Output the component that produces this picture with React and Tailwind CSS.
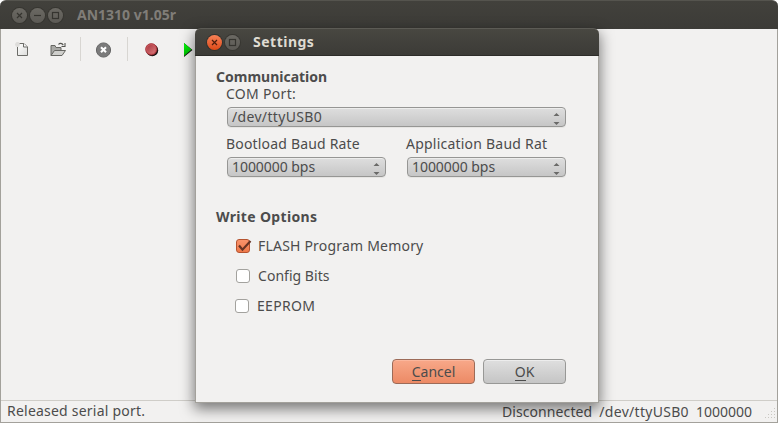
import React from "react";

function TitleButton({ kind, active }) {
  return (
    <span
      className={
        "flex h-[15px] w-[15px] shrink-0 items-center justify-center rounded-full " +
        (active
          ? "bg-linear-to-b from-[#f78155] to-[#dc4813] shadow-[0_0_0_1px_#33322e]"
          : "bg-linear-to-b from-[#6b6963] to-[#5c5a55] shadow-[0_0_0_1px_#373631]")
      }
    >
      <svg width="15" height="15" viewBox="0 0 15 15" fill="none" stroke={active ? "#4d1d0c" : "#35342f"} strokeWidth="1.2">
        {kind === "close" && <path d="M5 5l5 5M10 5l-5 5" />}
        {kind === "min" && <path d="M4 7.5h7" />}
        {kind === "max" && <rect x="4.5" y="4.5" width="6" height="6" />}
      </svg>
    </span>
  );
}

function Toolbar() {
  return (
    <div className="flex h-10 items-center pl-[13px]">
      <svg className="mt-px shrink-0" width="16" height="16" viewBox="0 0 16 16">
        <defs>
          <linearGradient id="paper" x2="1" y2="1">
            <stop stopColor="#fff" />
            <stop offset="1" stopColor="#dcdcda" />
          </linearGradient>
        </defs>
        <path d="M3.5 1.500h6.500l3.500 3.500v8.500h-10z" fill="url(#paper)" stroke="#6c6c68" />
        <path d="M9.500 1.500v3.500h4" fill="#f7f7f6" stroke="#6c6c68" />
        <path d="M1 2.500h5M3.500 0v5M1.800.800l3.400 3.400M5.200.800L1.800 4.200" stroke="#dedddb" strokeWidth="1.600" />
      </svg>
      <svg className="ml-5 mt-px shrink-0" width="16" height="16" viewBox="0 0 16 16">
        <path d="M1 13.500v-10h4l1 2h5v3" fill="#a9a9a6" stroke="#666662" />
        <path d="M1 13.500l3.500-5h11l-3.500 5z" fill="#cfcfcc" stroke="#666662" />
        <path d="M8.500 2.500c1-1.600 3.500-1.600 4.800.6M15 1v3.500h-3.500" fill="none" stroke="#555550" strokeWidth="1.100" />
      </svg>
      <span className="ml-[14px] h-6 w-px bg-[#d8d6d2]" />
      <svg className="ml-[15px] mt-px shrink-0" width="16" height="16" viewBox="0 0 16 16">
        <circle cx="7.500" cy="8" r="7.100" fill="#7b7b7b" stroke="#666" />
        <path d="M5 5.200l5 5M10 5.200l-5 5" stroke="#fff" strokeWidth="2.100" />
      </svg>
      <span className="ml-[15px] h-6 w-px bg-[#d8d6d2]" />
      <svg className="ml-4 mt-px shrink-0" width="16" height="16" viewBox="0 0 16 16">
        <defs>
          <linearGradient id="record" x2="1" y2="1">
            <stop stopColor="#a93840" />
            <stop offset="1" stopColor="#dc7a7c" />
          </linearGradient>
        </defs>
        <circle cx="8.200" cy="8.200" r="6" fill="#111" />
        <circle cx="7.300" cy="7.300" r="5.700" fill="#c9575c" stroke="#a02c34" strokeWidth=".8" />
        <circle cx="7.300" cy="7.300" r="4.200" fill="url(#record)" />
      </svg>
      <svg className="ml-[23px] mt-px shrink-0" width="12" height="16" viewBox="0 0 12 16">
        <defs>
          <linearGradient id="play" x2="0" y2="1">
            <stop stopColor="#00ff08" />
            <stop offset="1" stopColor="#00b800" />
          </linearGradient>
        </defs>
        <path d="M1 1l8.500 7L1 15z" fill="#111" />
        <path d="M1 1l7.500 6.500L1 14z" fill="url(#play)" />
      </svg>
    </div>
  );
}

function Select({ label, tracking }) {
  return (
    <div className="ml-px mt-1 flex h-5 items-center justify-between rounded-[4px] border border-[#969694] bg-linear-to-b from-[#dedede] to-[#c6c6c6] px-[5px] pl-1 shadow-[inset_0_1px_0_#ededec,0_1px_0_#e6e5e3]">
      <span className={"whitespace-pre pb-[2px] " + tracking}>{label}</span>
      <svg className="mt-[4px]" width="7" height="12" viewBox="0 0 7 12" fill="#6a6a68">
        <path d="M.5 3L3.500 0l3 3zM.5 9h6l-3 3z" />
      </svg>
    </div>
  );
}

function Check({ label, checked, tracking, className = "" }) {
  return (
    <div className={"flex h-[30px] items-center " + className}>
      <span
        className={
          "mt-[2px] h-[14px] w-[14px] shrink-0 rounded-[3px] border " +
          (checked ? "border-[#b5532f] bg-linear-to-b from-[#f9936b] to-[#ee7849]" : "border-[#a3a29e] bg-white")
        }
      >
        {checked && (
          <svg className="overflow-visible" width="14" height="12" viewBox="0 0 14 12">
            <path d="M2 5.500l3.500 4.200L13.500 1" fill="none" stroke="#663324" strokeWidth="2.200" />
          </svg>
        )}
      </span>
      <span className={"ml-2 whitespace-pre " + tracking}>{label}</span>
    </div>
  );
}

function Button({ mnemonic, rest, primary }) {
  return (
    <button
      className={
        "flex h-[25px] w-[83px] items-center justify-center rounded-[4px] border " +
        (primary
          ? "border-[#9c6b58] bg-linear-to-b from-[#f8a889] to-[#ec8a65] shadow-[inset_0_1px_0_#fbb79d]"
          : "border-[#989896] bg-linear-to-b from-[#dfdfdf] to-[#c5c5c5] shadow-[inset_0_1px_0_#ededed]")
      }
    >
      <span className="border-b border-[#4c4c4c] leading-[17px]">{mnemonic}</span>
      <span className="leading-[18px]">{rest}</span>
    </button>
  );
}

function SettingsDialog() {
  return (
    <div className="absolute left-[195px] top-[28px] flex h-[375px] w-[404px] flex-col rounded-t-[6px] shadow-[0_5px_14px_1px_rgba(0,0,0,0.5)]">
      <div className="flex h-7 shrink-0 items-center rounded-t-[6px] border-t border-b border-t-[#5c5b55] border-b-[#2d2c29] bg-linear-to-b from-[#484741] to-[#3c3b37] pl-3">
        <TitleButton kind="close" active />
        <span className="w-[3px]" />
        <TitleButton kind="max" />
        <span className="ml-[13px] pb-[2px] text-[14px] font-bold tracking-[0.5px] text-[#dfdbd2]">Settings</span>
      </div>
      <div className="flex flex-1 flex-col border-x border-b border-[#a3a19b] bg-[#f2f1f0] pl-5 pr-8 pt-3">
        <div className="h-[17px] text-[14px] font-bold leading-[17px]">Communication</div>
        <div className="pl-[10px]">
          <div className="h-[18px] leading-[17px] tracking-[0.3px]">COM Port:</div>
          <Select label="/dev/ttyUSB0" tracking="tracking-[0.33px]" />
          <div className="mt-[7px] flex gap-5">
            <div className="w-[160px]">
              <div className="h-[19px] whitespace-nowrap leading-[19px] tracking-[0.18px]">Bootload Baud Rate</div>
              <Select label="1000000 bps" tracking="tracking-[-0.05px]" />
            </div>
            <div className="w-[160px]">
              <div className="h-[19px] whitespace-nowrap leading-[19px] tracking-[0.22px]">Application Baud Rat</div>
              <Select label="1000000 bps" tracking="tracking-[-0.05px]" />
            </div>
          </div>
        </div>
        <div className="mt-[31px] h-[18px] text-[14px] font-bold leading-[18px] tracking-[0.33px]">Write Options</div>
        <div className="mt-[4px]">
          <Check label="FLASH Program Memory" checked tracking="tracking-[0.2px]" className="pl-5" />
          <Check label="Config Bits" tracking="tracking-[0.03px]" className="pl-5" />
          <Check label="EEPROM" tracking="tracking-[0.3px]" className="pl-[19px]" />
        </div>
        <div className="mt-[39px] flex justify-end gap-2">
          <Button mnemonic="C" rest="ancel" primary />
          <Button mnemonic="O" rest="K" />
        </div>
      </div>
    </div>
  );
}

export default function App() {
  return (
    <div className="relative flex h-[423px] w-[778px] flex-col overflow-hidden bg-white font-['Noto_Sans',sans-serif] text-[14px] text-[#4c4c4c]">
      <div className="flex h-[29px] shrink-0 items-center rounded-t-[6px] border-t border-[#55544e] bg-linear-to-b from-[#42413c] to-[#3c3b37] pl-3">
        <div className="flex gap-[3px]">
          <TitleButton kind="close" />
          <TitleButton kind="min" />
          <TitleButton kind="max" />
        </div>
        <span className="ml-[14px] pb-[2px] font-bold text-[#807d78]">AN1310 v1.05r</span>
      </div>
      <div className="flex flex-1 flex-col border-x border-b border-[#a3a19b] bg-[#f2f1f0]">
        <Toolbar />
        <div className="flex-1" />
        <div className="flex h-[22px] items-center border-t border-[#cfcdc8] pl-[6px] pr-[1px]">
          <span className="pb-[2px] tracking-[0.22px]">Released serial port.</span>
          <span className="ml-auto pb-px tracking-[0.1px]">Disconnected</span>
          <span className="ml-[7px] pb-px tracking-[0.3px]">/dev/ttyUSB0</span>
          <span className="ml-[7px] pb-px">1000000</span>
          <svg className="ml-[13px] mt-1" width="11" height="11" viewBox="0 0 11 11" fill="#c9c7c2">
            <path d="M9 0h1v1H9zM6 3h1v1H6zM9 3h1v1H9zM3 6h1v1H3zM6 6h1v1H6zM9 6h1v1H9zM0 9h1v1H0zM3 9h1v1H3zM6 9h1v1H6zM9 9h1v1H9z" />
          </svg>
        </div>
      </div>
      <SettingsDialog />
    </div>
  );
}
